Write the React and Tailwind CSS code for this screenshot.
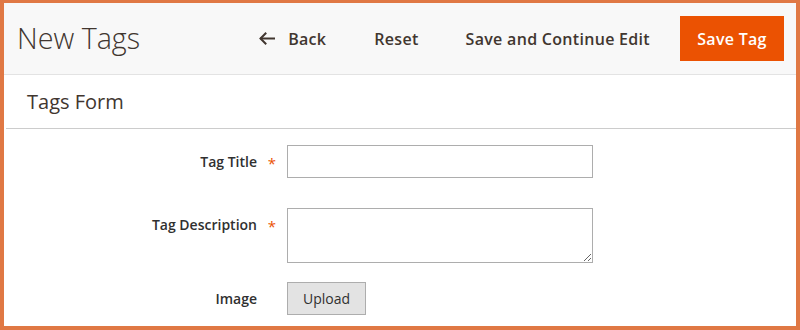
import React from 'react';

function Field({ label, required, children }) {
  return (
    <div className="flex items-start">
      <div className="w-[253px] h-[33px] flex items-center justify-end text-[14px] font-semibold text-[#303030]">
        {label}
      </div>
      <div className="w-[30px] h-[33px] flex items-center justify-center text-[15px] text-[#eb5202]">
        {required ? <span className="mt-[4px]">*</span> : null}
      </div>
      {children}
    </div>
  );
}

export default function App() {
  return (
    <div
      className="w-[800px] h-[330px] bg-white border-[4px] border-t-[3px] border-[#e07844] overflow-hidden"
      style={{ fontFamily: '"Open Sans", "Noto Sans", sans-serif' }}
    >
      {/* page header */}
      <div className="h-[72px] bg-[#f8f8f8] border-b border-[#e3e3e3] flex items-center pl-[13px] pr-[12px]">
        <h1 className="text-[28.7px] font-light text-[#41362f] leading-none">New Tags</h1>
        <div className="ml-auto flex items-center text-[16px] font-semibold tracking-[0.3px] text-[#41362f]">
          <button className="flex items-center gap-[13px]">
            <svg width="16" height="13" viewBox="0 0 16 13" fill="none" stroke="#41362f" strokeWidth="2" strokeLinecap="square">
              <path d="M15 6.5H2" />
              <path d="M6.5 1.5L1.5 6.5L6.5 11.5" />
            </svg>
            Back
          </button>
          <button className="ml-[48px]">Reset</button>
          <button className="ml-[47px]">Save and Continue Edit</button>
          <button className="ml-[30px] w-[104px] h-[45px] bg-[#eb5202] text-white flex items-center justify-center">
            Save Tag
          </button>
        </div>
      </div>

      {/* fieldset title */}
      <div className="ml-[2px] h-[54px] border-b border-[#cccccc] flex items-center pl-[21px]">
        <span className="text-[20px] text-[#41362f]">Tags Form</span>
      </div>

      {/* form */}
      <div className="pt-[16px] flex flex-col">
        <Field label="Tag Title" required>
          <input className="w-[306px] h-[33px] border border-[#adadad] bg-white outline-none" />
        </Field>
        <div className="h-[30px]" />
        <Field label="Tag Description" required>
          <textarea className="w-[306px] h-[55px] border border-[#adadad] bg-white outline-none block" />
        </Field>
        <div className="h-[19px]" />
        <Field label="Image">
          <button className="w-[79px] h-[33px] bg-[#e3e3e3] border border-[#adadad] text-[14px] text-[#303030]">
            Upload
          </button>
        </Field>
      </div>
    </div>
  );
}
